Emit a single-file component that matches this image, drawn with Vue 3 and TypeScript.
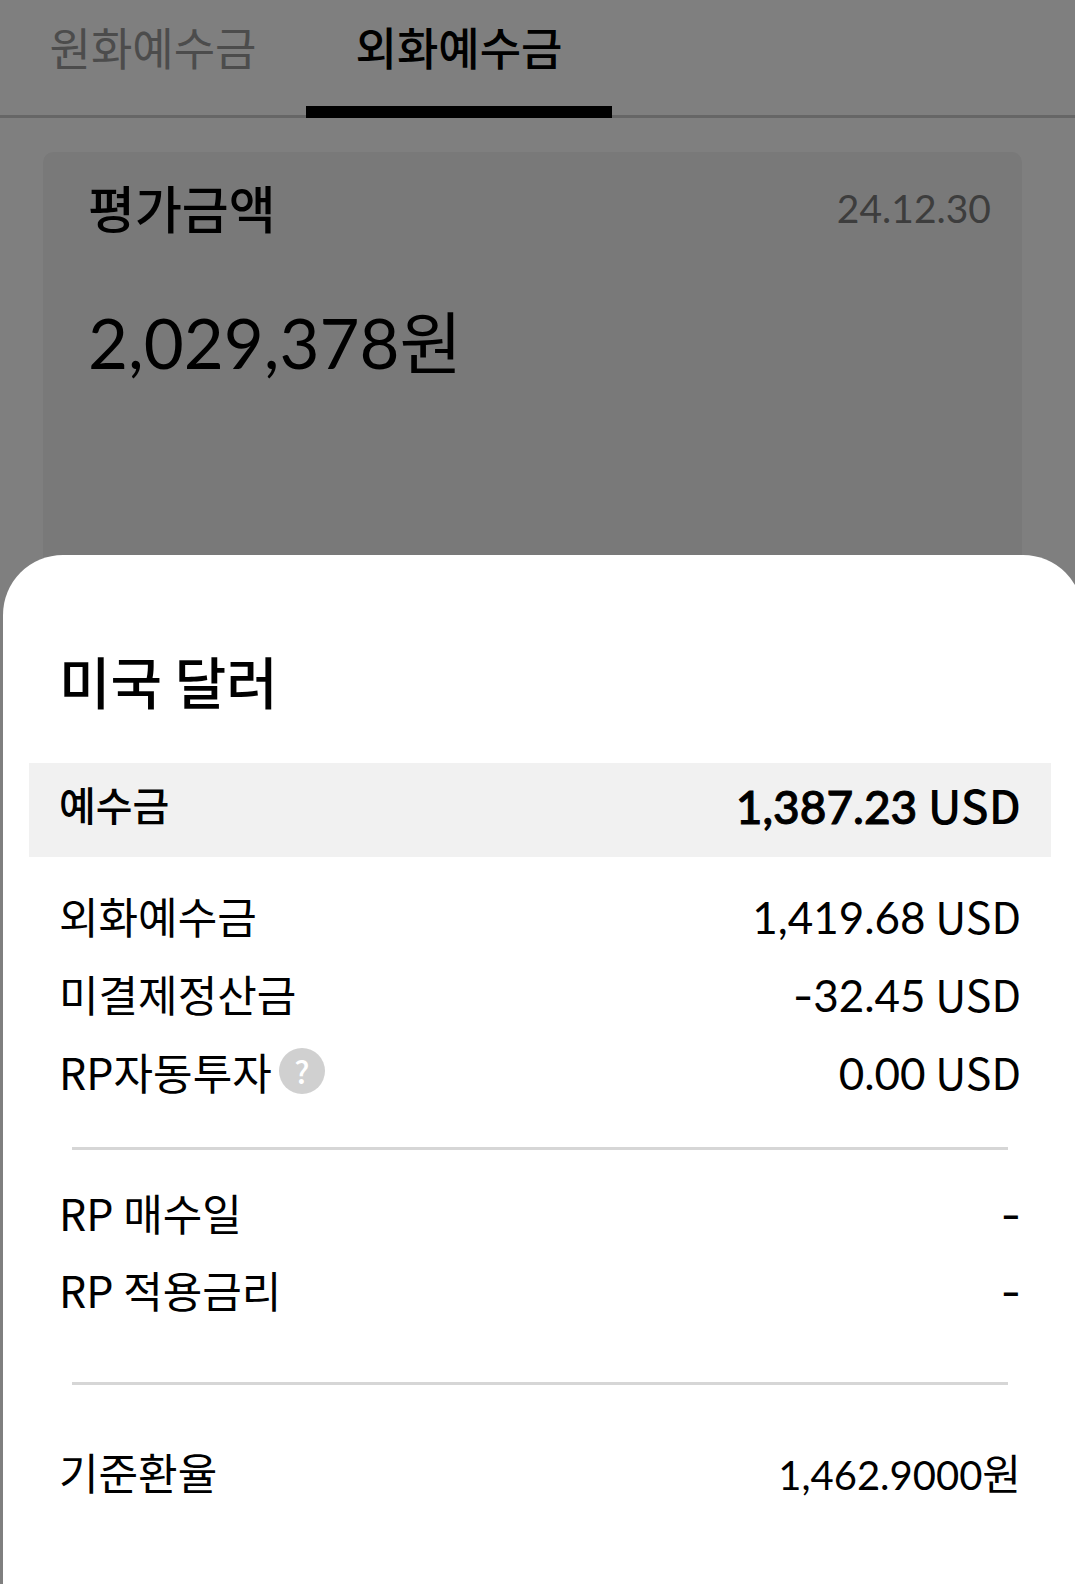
<script setup lang="ts">
import { ref } from 'vue'

interface Row {
  label: string
  sign?: string
  amount?: string
  unit?: string
  help?: boolean
}

const tabs: string[] = ['원화예수금', '외화예수금']
const activeTab = ref(1)

const balances: Row[] = [
  { label: '외화예수금', amount: '1,419.68', unit: ' USD' },
  { label: '미결제정산금', sign: '-', amount: '32.45', unit: ' USD' },
  { label: 'RP자동투자', amount: '0.00', unit: ' USD', help: true },
]
const rpRows: Row[] = [
  { label: 'RP 매수일', sign: '-' },
  { label: 'RP 적용금리', sign: '-' },
]
</script>

<template>
  <div class="screen">
    <main class="page">
      <nav class="tabs">
        <button
          v-for="(tab, i) in tabs"
          :key="tab"
          type="button"
          class="tab"
          :class="{ active: i === activeTab }"
          @click="activeTab = i"
        >{{ tab }}</button>
      </nav>
      <section class="card">
        <header class="card-head">
          <h2>평가금액</h2>
          <time class="num" datetime="2024-12-30">24.12.30</time>
        </header>
        <p class="total"><span class="num">2,029,378</span>원</p>
      </section>
    </main>

    <div class="scrim">
      <section class="sheet" role="dialog" aria-labelledby="sheet-title">
        <h1 id="sheet-title">미국 달러</h1>
        <dl class="summary">
          <dt>예수금</dt>
          <dd><span class="num">1,387.23</span> USD</dd>
        </dl>
        <dl class="rows first">
          <div v-for="row in balances" :key="row.label" class="row">
            <dt>
              {{ row.label }}<button v-if="row.help" type="button" class="help" aria-label="도움말">?</button>
            </dt>
            <dd><span v-if="row.sign" class="sign">{{ row.sign }}</span><span class="num">{{ row.amount }}</span>{{ row.unit }}</dd>
          </div>
        </dl>
        <hr />
        <dl class="rows second">
          <div v-for="row in rpRows" :key="row.label" class="row">
            <dt>{{ row.label }}</dt>
            <dd><span class="sign">{{ row.sign }}</span></dd>
          </div>
        </dl>
        <hr />
        <dl class="rows third">
          <div class="row">
            <dt>기준환율</dt>
            <dd class="rate"><span class="num">1,462.9000</span>원</dd>
          </div>
        </dl>
      </section>
    </div>
  </div>
</template>

<style>
body {
  margin: 0;
  background: #fff;
}
</style>

<style scoped>
.screen {
  display: grid;
  grid-template-columns: minmax(0, 1fr);
  min-height: 100vh;
  overflow: hidden;
  color: #000;
  font-family: "Noto Sans CJK KR", sans-serif;
}
.page,
.scrim {
  grid-area: 1 / 1;
}
.page {
  display: flex;
  flex-direction: column;
}
h1,
h2,
p,
dl,
dd {
  margin: 0;
}
/* Numerals use their own face and must not stretch the line box. */
.num {
  font-family: Lato, sans-serif;
  line-height: 0;
}
.sign {
  font-family: Inter, sans-serif;
  line-height: 0;
}
button {
  padding: 0;
  border: 0;
  background: none;
  font-family: inherit;
  cursor: pointer;
}
.tabs {
  display: flex;
  height: 118px;
  box-shadow: inset 0 -3px #ccc;
}
.tab {
  box-sizing: border-box;
  width: 306px;
  padding-bottom: 12px;
  border-bottom: 12px solid transparent;
  color: #999;
  font-size: 45px;
  line-height: 94px;
}
.tab.active {
  border-bottom-color: #000;
  color: #000;
  font-weight: 500;
}
.card {
  flex: 1;
  margin: 34px 53px 0 43px;
  padding: 16px 31px 0 45px;
  border-radius: 10px;
  background: #f3f3f3;
}
.card-head {
  display: flex;
  align-items: center;
  justify-content: space-between;
  line-height: 78px;
}
.card-head h2 {
  font-size: 51px;
  font-weight: 500;
}
.card-head time {
  padding-top: 2px;
  color: #7a7a7a;
  font-size: 39px;
}
.total {
  margin-top: 42px;
  font-size: 68px;
  line-height: 104px;
}
.total .num {
  font-size: 69px;
}
.scrim {
  display: flex;
  flex-direction: column;
  justify-content: flex-end;
  background: rgba(0, 0, 0, 0.5);
}
.sheet {
  margin: 0 -8px 0 3px;
  padding: 85px 32px 74px 26px;
  border-radius: 60px 60px 0 0;
  background: #fff;
}
h1 {
  margin: 0 30px 43px;
  font-size: 56px;
  font-weight: 500;
  line-height: 80px;
}
.summary,
.row {
  display: flex;
  align-items: center;
  justify-content: space-between;
}
.summary {
  padding: 1px 30px 13px;
  background: #f1f1f1;
  font-size: 46px;
  font-weight: 500;
  line-height: 80px;
}
.summary dt {
  font-size: 40px;
}
.summary .num {
  -webkit-text-stroke: 1px #000;
}
.rows {
  padding: 0 30px;
  font-size: 43px;
  line-height: 77px;
}
.row dt {
  display: flex;
  align-items: center;
}
.row .num,
.row .sign {
  font-size: 44px;
}
.row .rate {
  font-size: 42px;
}
.row.row .rate .num {
  font-size: 40px;
}
.first {
  margin: 19px 0 37px;
  line-height: 78px;
}
.second {
  margin: 24px 0 54px;
}
.third {
  margin-top: 48px;
}
hr {
  height: 3px;
  margin: 0 43px;
  border: 0;
  background: #d6d6d6;
}
.help {
  width: 46px;
  height: 46px;
  margin-left: 7px;
  border-radius: 50%;
  background: #d0d0d0;
  color: #fff;
  font-size: 31px;
  font-weight: 500;
  line-height: 44px;
}
</style>
